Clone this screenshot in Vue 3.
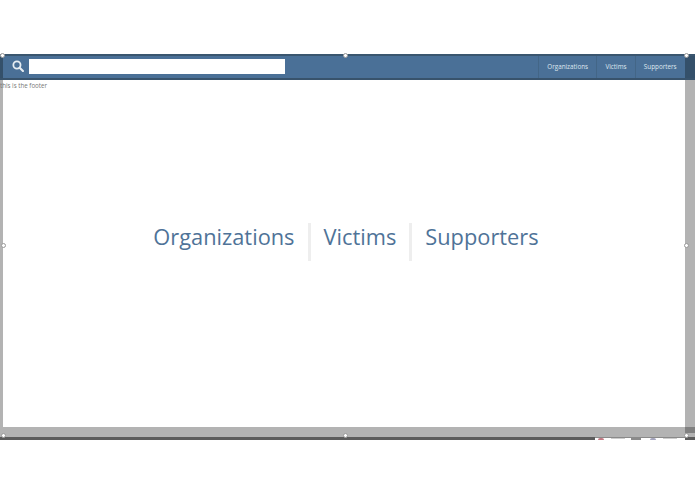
<script setup>
const links = ['Organizations', 'Victims', 'Supporters']
const handles = [
  { x: 2, y: 55 }, { x: 345, y: 55 }, { x: 686, y: 55 },
  { x: 3, y: 245 }, { x: 686, y: 245 },
  { x: 3, y: 435 }, { x: 345, y: 435 }, { x: 686, y: 435 },
]
</script>

<template>
  <div class="page">
    <div class="stage">
      <header class="nav">
        <div class="nav-start"></div>
        <svg class="search-icon" viewBox="0 0 16 16" width="12" height="12">
          <circle cx="6.6" cy="6.6" r="4.8" fill="none" stroke="#e6edf3" stroke-width="2.4" />
          <path d="M10.2 10.2 L14.6 14.6" stroke="#e6edf3" stroke-width="2.8" stroke-linecap="round" />
        </svg>
        <div class="search-box"></div>
        <nav class="nav-links">
          <a v-for="l in links" :key="l" class="nav-link">{{ l }}</a>
        </nav>
        <div class="nav-end"></div>
      </header>
      <div class="middle">
        <div class="side-left"></div>
        <main class="content">
          <p class="footer-note">this is the footer</p>
          <div class="big-links">
            <a v-for="l in links" :key="l" class="big-link">{{ l }}</a>
          </div>
        </main>
        <div class="side-right"></div>
      </div>
      <div class="bottom-gray"><div class="bottom-corner"></div></div>
      <div class="bottom-dark">
        <div class="dark-a"></div>
        <div class="tray">
          <span class="dot red"></span>
          <span class="dash"></span>
          <span class="bar"></span>
          <span class="dot blue"></span>
          <span class="dash"></span>
        </div>
      </div>
    </div>
    <span v-for="(h, i) in handles" :key="i" class="handle" :style="{ left: h.x + 'px', top: h.y + 'px' }"></span>
  </div>
</template>

<style>
html, body { margin: 0; background: #fff; }
</style>

<style scoped>
.page {
  position: relative;
  width: 695px;
  height: 494px;
  background: #fff;
  padding-top: 54px;
  box-sizing: border-box;
  overflow: hidden;
  font-family: "Open Sans", sans-serif;
}
.stage {
  height: 386px;
  display: flex;
  flex-direction: column;
}
.nav {
  height: 26px;
  flex: none;
  box-sizing: border-box;
  display: flex;
  align-items: center;
  background: #4a7097;
  border-top: 2px solid #3a566f;
  border-bottom: 2px solid #38536c;
}
.nav-start {
  width: 3px;
  align-self: stretch;
  background: #34506a;
  flex: none;
}
.search-icon {
  margin-left: 9px;
  margin-top: -3px;
  flex: none;
}
.search-box {
  width: 256px;
  height: 15px;
  margin-left: 5px;
  margin-top: -1px;
  background: #fff;
  flex: none;
}
.nav-links {
  margin-left: auto;
  display: flex;
  align-self: stretch;
}
.nav-link {
  display: flex;
  align-items: center;
  padding: 0 8.4px 2px 8px;
  font-size: 6.3px;
  color: #dfe7ef;
  border-left: 1px solid #436687;
}
.nav-end {
  width: 10px;
  align-self: stretch;
  background: #34506a;
}
.middle {
  flex: 1;
  display: flex;
  min-height: 0;
}
.side-left {
  width: 3px;
  background: #b3b3b3;
  flex: none;
}
.side-right {
  width: 10px;
  background: #b3b3b3;
  flex: none;
}
.content {
  flex: 1;
  background: #fff;
  position: relative;
  display: flex;
  align-items: center;
  justify-content: center;
}
.footer-note {
  position: absolute;
  left: -3px;
  top: 1px;
  margin: 0;
  font-size: 6.2px;
  line-height: 10px;
  color: #777;
}
.big-links {
  display: flex;
  margin-top: -24px;
  margin-left: 4px;
}
.big-link {
  font-size: 21.8px;
  line-height: 28px;
  padding: 0 13px 10px;
  color: #4f7398;
  border-left: 3px solid #eeeeee;
}
.big-link:first-child {
  border-left: 0;
}
.bottom-gray {
  height: 10px;
  flex: none;
  background: #b3b3b3;
  display: flex;
  justify-content: flex-end;
}
.bottom-corner {
  width: 10px;
  height: 6px;
  background: #808080;
}
.bottom-dark {
  height: 3px;
  flex: none;
  display: flex;
  background: #5c5c5c;
}
.dark-a {
  flex: 1;
}
.tray {
  width: 90px;
  display: flex;
  align-items: flex-start;
  background: #fff;
  border-top: 1px solid #8a8a8a;
  margin-right: 10px;
  box-sizing: border-box;
  overflow: hidden;
}
.dot {
  width: 6px;
  height: 2px;
  border-radius: 2px 2px 0 0;
  flex: none;
}
.red { background: #c47b85; margin-left: 3px; }
.blue { background: #a5a5bd; margin-left: 9px; }
.bar { width: 10px; height: 2px; background: #8a8a8a; margin-left: 6px; flex: none; }
.dash { width: 14px; height: 1px; background: #ccc; margin-left: 7px; flex: none; }
.handle {
  position: absolute;
  width: 3px;
  height: 3px;
  margin: -2px 0 0 -2px;
  background: #fff;
  border: 0.5px solid #999;
  border-radius: 50%;
  box-sizing: content-box;
}
</style>
